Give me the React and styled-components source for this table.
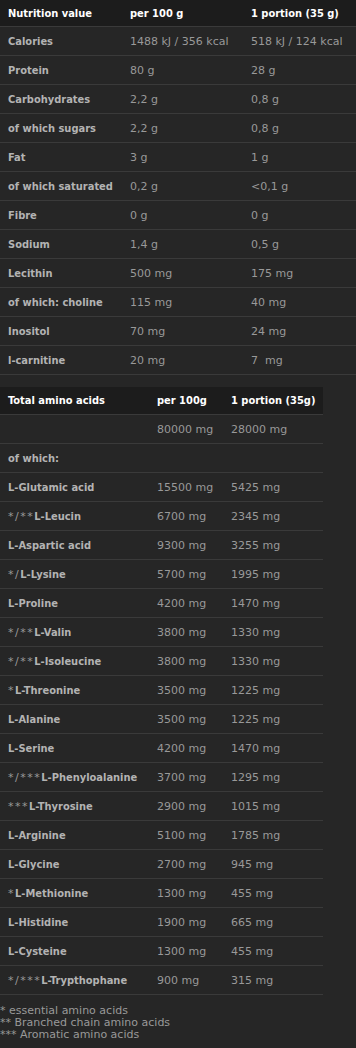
import React from "react";
import styled, { createGlobalStyle } from "styled-components";

const GlobalStyle = createGlobalStyle`
  html, body {
    margin: 0;
    padding: 0;
    background: #262626;
  }
  body {
    font-family: "DejaVu Sans", Verdana, sans-serif;
    font-size: 11px;
    color: #999;
  }
`;

const Page = styled.div`
  width: 356px;
  background: #262626;
  padding-bottom: 8px;
`;

const Table = styled.div`
  width: ${(p) => p.width}px;
  display: flex;
  flex-direction: column;
  margin-bottom: ${(p) => p.gap || 0}px;
`;

const Row = styled.div`
  display: grid;
  grid-template-columns: ${(p) => p.cols};
  height: ${(p) => p.height}px;
  align-items: center;
  border-bottom: 1px solid #3a3a3a;
  background: ${(p) => (p.head ? "#1c1c1c" : "transparent")};
`;

const Label = styled.div`
  padding-left: 8px;
  font-family: "DejaVu Sans Condensed", "DejaVu Sans", sans-serif;
  font-weight: bold;
  letter-spacing: 0;
  color: ${(p) => (p.head ? "#fff" : "#b3b3b3")};
  white-space: nowrap;
`;

const Mark = styled.span`
  font-family: "DejaVu Sans", sans-serif;
  font-weight: normal;
  letter-spacing: 1.5px;
  color: #999;
`;

const Value = styled.div`
  padding-left: 8px;
  color: #999;
  white-space: pre;
`;

const HeadValue = styled(Label)`
  color: #fff;
`;

const Notes = styled.div`
  margin-top: 10px;
  line-height: 12px;
  color: #999;
`;

const nutrition = [
  ["Calories", "1488 kJ / 356 kcal", "518 kJ / 124 kcal"],
  ["Protein", "80 g", "28 g"],
  ["Carbohydrates", "2,2 g", "0,8 g"],
  ["of which sugars", "2,2 g", "0,8 g"],
  ["Fat", "3 g", "1 g"],
  ["of which saturated", "0,2 g", "<0,1 g"],
  ["Fibre", "0 g", "0 g"],
  ["Sodium", "1,4 g", "0,5 g"],
  ["Lecithin", "500 mg", "175 mg"],
  ["of which: choline", "115 mg", "40 mg"],
  ["Inositol", "70 mg", "24 mg"],
  ["l-carnitine", "20 mg", "7  mg"],
];

const amino = [
  ["", "L-Glutamic acid", "15500 mg", "5425 mg"],
  ["*/**", "L-Leucin", "6700 mg", "2345 mg"],
  ["", "L-Aspartic acid", "9300 mg", "3255 mg"],
  ["*/", "L-Lysine", "5700 mg", "1995 mg"],
  ["", "L-Proline", "4200 mg", "1470 mg"],
  ["*/**", "L-Valin", "3800 mg", "1330 mg"],
  ["*/**", "L-Isoleucine", "3800 mg", "1330 mg"],
  ["*", "L-Threonine", "3500 mg", "1225 mg"],
  ["", "L-Alanine", "3500 mg", "1225 mg"],
  ["", "L-Serine", "4200 mg", "1470 mg"],
  ["*/***", "L-Phenyloalanine", "3700 mg", "1295 mg"],
  ["***", "L-Thyrosine", "2900 mg", "1015 mg"],
  ["", "L-Arginine", "5100 mg", "1785 mg"],
  ["", "L-Glycine", "2700 mg", "945 mg"],
  ["*", "L-Methionine", "1300 mg", "455 mg"],
  ["", "L-Histidine", "1900 mg", "665 mg"],
  ["", "L-Cysteine", "1300 mg", "455 mg"],
  ["*/***", "L-Trypthophane", "900 mg", "315 mg"],
];

const COLS1 = "122px 121px 1fr";
const COLS2 = "149px 74px 1fr";

export default function App() {
  return (
    <Page>
      <GlobalStyle />
      <Table width={356} gap={12}>
        <Row cols={COLS1} height={26} head>
          <Label head>Nutrition value</Label>
          <HeadValue>per 100 g</HeadValue>
          <HeadValue>1 portion (35 g)</HeadValue>
        </Row>
        {nutrition.map(([name, a, b]) => (
          <Row key={name} cols={COLS1} height={28}>
            <Label>{name}</Label>
            <Value>{a}</Value>
            <Value>{b}</Value>
          </Row>
        ))}
      </Table>

      <Table width={323}>
        <Row cols={COLS2} height={27} head>
          <Label head>Total amino acids</Label>
          <HeadValue>per 100g</HeadValue>
          <HeadValue>1 portion (35g)</HeadValue>
        </Row>
        <Row cols={COLS2} height={28}>
          <Label />
          <Value>80000 mg</Value>
          <Value>28000 mg</Value>
        </Row>
        <Row cols={COLS2} height={28}>
          <Label>of which:</Label>
          <Value />
          <Value />
        </Row>
        {amino.map(([mark, name, a, b]) => (
          <Row key={name} cols={COLS2} height={28}>
            <Label>
              {mark && <Mark>{mark}</Mark>}
              {name}
            </Label>
            <Value>{a}</Value>
            <Value>{b}</Value>
          </Row>
        ))}
      </Table>

      <Notes>
        * essential amino acids
        <br />
        ** Branched chain amino acids
        <br />
        *** Aromatic amino acids
      </Notes>
    </Page>
  );
}
